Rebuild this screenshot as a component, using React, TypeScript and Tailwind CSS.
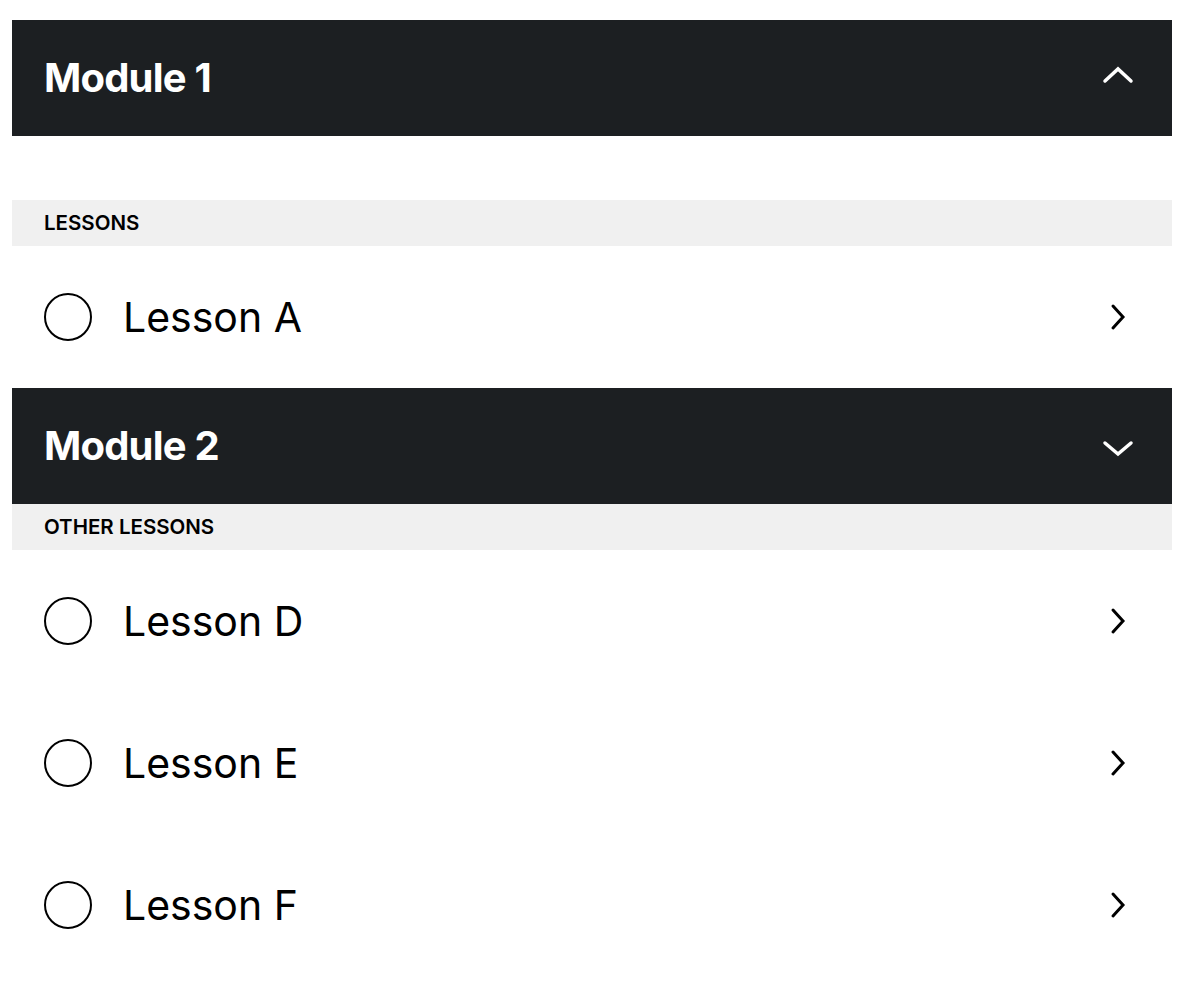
type Section = {
  title: string;
  open: boolean;
  group: string;
  lessons: string[];
  spaced?: boolean;
};

const sections: Section[] = [
  { title: "Module 1", open: true, group: "Lessons", lessons: ["Lesson A"], spaced: true },
  { title: "Module 2", open: false, group: "Other Lessons", lessons: ["Lesson D", "Lesson E", "Lesson F"] },
];

function Caret({ up }: { up: boolean }) {
  return (
    <svg
      width="34"
      height="20"
      viewBox="0 0 34 20"
      fill="none"
      className={`ml-auto mr-[37px] ${up ? "mb-[7px]" : "mt-[6px]"}`}
    >
      <polyline
        points={up ? "4,16 17,4 30,16" : "4,4 17,15 30,4"}
        stroke="white"
        strokeWidth="3.5"
        strokeLinecap="round"
        strokeLinejoin="miter"
      />
    </svg>
  );
}

function LessonRow({ name }: { name: string }) {
  return (
    <div className="flex items-center h-[142px] px-8">
      <span className="w-12 h-12 rounded-full border-2 border-black shrink-0" />
      <span className="ml-[31px] text-[41px] leading-none text-black">{name}</span>
      <svg width="16" height="28" viewBox="0 0 16 28" fill="none" className="ml-auto mr-[14px]">
        <polyline
          points="3,3 13,14 3,25"
          stroke="black"
          strokeWidth="3"
          strokeLinecap="round"
          strokeLinejoin="miter"
        />
      </svg>
    </div>
  );
}

export default function App() {
  return (
    <div
      className="bg-white pl-3 pr-5 pt-5 pb-[30px]"
      style={{ fontFamily: "Inter, 'Noto Sans', sans-serif" }}
    >
      {sections.map((s) => (
        <div key={s.title}>
          <div className="flex items-center h-[116px] pl-8 bg-[#1c1f22] text-white">
            <h2 className="text-[40px] font-bold tracking-[-0.02em] leading-none">{s.title}</h2>
            <Caret up={s.open} />
          </div>
          <div className={s.spaced ? "pt-16" : ""}>
            <div className="flex items-center h-[46px] px-8 bg-[#f0f0f0]">
              <span className="text-[20.5px] font-semibold uppercase text-black">
                {s.group}
              </span>
            </div>
            {s.lessons.map((l) => (
              <LessonRow key={l} name={l} />
            ))}
          </div>
        </div>
      ))}
    </div>
  );
}
